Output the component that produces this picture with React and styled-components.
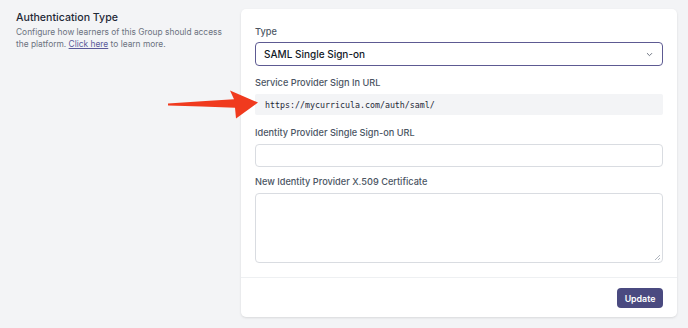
import styled, { createGlobalStyle } from "styled-components";

const GlobalStyle = createGlobalStyle`
  html, body {
    margin: 0;
    background: #f3f4f6;
    font-family: Inter, "Noto Sans", sans-serif;
    -webkit-font-smoothing: antialiased;
  }
`

const Page = styled.div`
  position: relative;
  display: grid;
  grid-template-columns: 225px 436px;
  padding: 9px 11px 11px 16px;
  width: 688px;
  height: 328px;
  box-sizing: border-box;
`

const Intro = styled.div`
  padding-top: 2px;
`

const Heading = styled.h2`
  margin: 0 0 1px;
  font-size: 10.6px;
  line-height: 14px;
  font-weight: 500;
  color: #1f2937;
`

const Description = styled.p`
  margin: 0;
  font-size: 8.4px;
  line-height: 12px;
  color: #6b7280;
  width: 215px;

  a {
    color: #5b5a9a;
    text-decoration: underline;
  }
`

const Card = styled.div`
  background: #fff;
  border-radius: 5px;
  box-shadow: 0 1px 3px rgba(0, 0, 0, 0.08), 0 1px 2px rgba(0, 0, 0, 0.04);
  display: flex;
  flex-direction: column;
  height: 308px;
  box-sizing: border-box;
`

const Fields = styled.div`
  padding: 17px 14px 14px;
  display: flex;
  flex-direction: column;
`

const Field = styled.div`
  display: flex;
  flex-direction: column;
  margin-bottom: ${p => p.$gap || 0}px;
`

const Label = styled.label`
  font-size: 9.2px;
  line-height: 12px;
  font-weight: 500;
  color: #4b5563;
  margin-bottom: ${p => p.$gap || 4}px;
`

const Select = styled.div`
  height: 24px;
  box-sizing: border-box;
  border: 1.5px solid #5d5a92;
  border-radius: 4px;
  display: flex;
  align-items: center;
  justify-content: space-between;
  padding: 0 8px 0 8px;
  font-size: 10px;
  font-weight: 500;
  color: #111827;
`

const CodeBox = styled.div`
  height: 21px;
  background: #f3f4f6;
  border-radius: 2px;
  display: flex;
  align-items: center;
  padding: 0 10px;
  font-family: "DejaVu Sans Mono", "Liberation Mono", monospace;
  font-size: 8.3px;
  color: #1f2937;
`

const Input = styled.div`
  height: 23px;
  box-sizing: border-box;
  border: 1px solid #d9dce1;
  border-radius: 4px;
`

const TextArea = styled.div`
  position: relative;
  height: 70px;
  box-sizing: border-box;
  border: 1px solid #d9dce1;
  border-radius: 4px;
`

const Grip = styled.svg`
  position: absolute;
  right: 1px;
  bottom: 1px;
`

const Footer = styled.div`
  margin-top: auto;
  border-top: 1px solid #eef0f2;
  display: flex;
  justify-content: flex-end;
  padding: 10px 14px 9px;
`

const Button = styled.button`
  height: 20px;
  width: 46px;
  padding: 0;
  border: none;
  border-radius: 4px;
  background: #4a4a80;
  color: #fff;
  font-family: inherit;
  font-size: 8.8px;
  font-weight: 600;
`

const Arrow = styled.svg`
  position: absolute;
  left: 164px;
  top: 86px;
`

export default function App() {
  return (
    <>
      <GlobalStyle />
      <Page>
        <Intro>
          <Heading>Authentication Type</Heading>
          <Description>
            Configure how learners of this Group should access the platform. <a href="#">Click here</a> to learn more.
          </Description>
        </Intro>
        <Card>
          <Fields>
            <Field $gap={11}>
              <Label>Type</Label>
              <Select>
                <span>SAML Single Sign-on</span>
                <svg width="9" height="9" viewBox="0 0 10 10">
                  <path d="M2.5 3.8 L5 6.3 L7.5 3.8" fill="none" stroke="#6b7280" strokeWidth="1.1" strokeLinecap="round" strokeLinejoin="round" />
                </svg>
              </Select>
            </Field>
            <Field $gap={12}>
              <Label $gap={5}>Service Provider Sign In URL</Label>
              <CodeBox>https://mycurricula.com/auth/saml/</CodeBox>
            </Field>
            <Field $gap={9}>
              <Label $gap={5}>Identity Provider Single Sign-on URL</Label>
              <Input />
            </Field>
            <Field>
              <Label $gap={5}>New Identity Provider X.509 Certificate</Label>
              <TextArea>
                <Grip width="8" height="8" viewBox="0 0 8 8">
                  <path d="M7 2 L2 7 M7 5 L5 7" stroke="#9ca3af" strokeWidth="0.8" />
                </Grip>
              </TextArea>
            </Field>
          </Fields>
          <Footer>
            <Button>Update</Button>
          </Footer>
        </Card>
        <Arrow width="96" height="36" viewBox="0 0 96 36">
          <path d="M4 17.6 Q38 15 70 13.2 L66 4.5 L94 16.5 L72 32.5 L71 21.8 Q38 20.5 4 19.6 Z" fill="#f03a1e" />
        </Arrow>
      </Page>
    </>
  );
}
